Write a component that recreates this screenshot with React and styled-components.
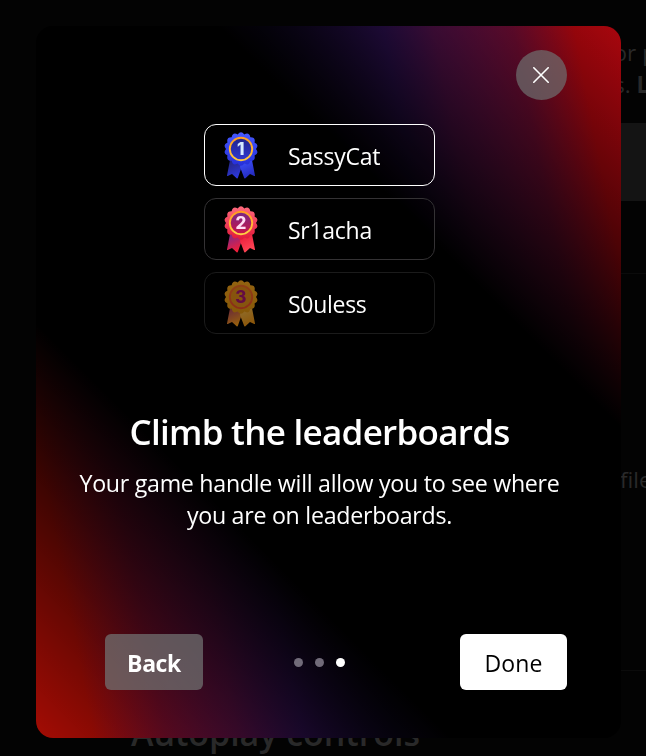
import React from "react";
import styled, { createGlobalStyle } from "styled-components";

const GlobalStyle = createGlobalStyle`
  * { box-sizing: border-box; }
  html, body { margin: 0; height: 100%; overflow: hidden; background: #030303; }
  body { font-family: "Open Sans", "Noto Sans", sans-serif; color: #fff; }
  button { font: inherit; border: 0; padding: 0; cursor: pointer; }
`;

const Page = styled.div`
  width: 646px;
  height: 756px;
  padding-left: 60px;
  overflow: hidden;
  color: #292929;
  background: #030303;
  display: flex;
  flex-direction: column;

  > * { flex: none; }
`;

const Intro = styled.p`
  margin: 0;
  height: 123px;
  padding: 37px 0 0 546px;
  font-size: 22.5px;
  line-height: 32px;
  white-space: nowrap;
`;

const IntroLine = styled.span`
  display: block;
  padding-left: ${(p) => p.$indent || 0}px;
`;

const Panel = styled.div`
  height: 78px;
  background: #141414;
`;

const Section = styled.section`
  height: ${(p) => p.$height}px;
  padding: ${(p) => p.$padding};
  border-bottom: 1px solid #0b0b0b;
  font-size: 22.5px;
  line-height: 32px;
`;

const SectionHeading = styled.h2`
  margin: 0;
  padding: 38px 0 0 71px;
  font-size: 34px;
  line-height: 48px;
  font-weight: 600;
  letter-spacing: -0.05px;
  white-space: nowrap;
`;

const Overlay = styled.div`
  position: fixed;
  inset: 0;
  padding: 26px 25px 18px 36px;
`;

const Dialog = styled.div`
  width: 585px;
  height: 712px;
  padding: 24px 54px 48px 36px;
  border-radius: 17px;
  overflow: hidden;
  display: flex;
  flex-direction: column;
  background:
    linear-gradient(45deg, transparent 0%, #000 32%, #000 69%, transparent 100%),
    linear-gradient(
      79deg,
      rgb(164, 12, 4) 0%,
      rgb(164, 12, 4) 8%,
      rgb(125, 13, 44) 18%,
      rgb(107, 18, 80) 28%,
      rgb(70, 22, 120) 37%,
      rgb(36, 16, 90) 50%,
      rgb(70, 24, 128) 67%,
      rgb(107, 21, 95) 74%,
      rgb(122, 13, 55) 85%,
      rgb(170, 6, 13) 93.5%,
      rgb(168, 6, 14) 100%
    );
`;

const CloseButton = styled.button`
  align-self: flex-end;
  flex: none;
  width: 51px;
  height: 50px;
  border-radius: 50%;
  display: grid;
  place-items: center;
  background: rgba(110, 110, 110, 0.72);

  svg { margin-right: 1px; }
`;

const Leaderboard = styled.ol`
  list-style: none;
  margin: 24px 0 0;
  padding: 0;
  align-self: center;
  display: flex;
  flex-direction: column;
  gap: 12px;
`;

const Player = styled.li`
  width: 231px;
  height: 62px;
  border: 1px solid ${(p) => p.$border};
  border-radius: 12px;
  background: rgba(0, 0, 0, 0.15);
  display: flex;
  align-items: center;
  gap: 30px;
  padding: 1px 0 0 19px;
`;

const MedalIcon = styled.svg`
  flex: none;
  opacity: ${(p) => p.$opacity};
`;

const Handle = styled.span`
  font-size: 23px;
  line-height: 32px;
  font-weight: 460;
  letter-spacing: -0.28px;
`;

const Title = styled.h1`
  margin: 74px 0 0;
  font-size: 35px;
  line-height: 48px;
  font-weight: 640;
  text-align: center;
  white-space: nowrap;
  letter-spacing: -0.72px;
`;

const Description = styled.p`
  margin: 11px 0 0;
  font-size: 23.2px;
  line-height: 32px;
  font-weight: 460;
  text-align: center;
  white-space: nowrap;
  letter-spacing: -0.27px;
`;

const Footer = styled.div`
  margin: auto 0 0 33px;
  display: grid;
  grid-template-columns: 98px 1fr 107px;
  align-items: center;
`;

const FooterButton = styled.button`
  && {
    height: 56px;
    border-radius: 6px;
    padding-top: 2px;
    font-size: 23px;
    letter-spacing: ${(p) => (p.$primary ? "0.1px" : "-0.4px")};
    font-weight: ${(p) => (p.$primary ? 480 : 660)};
    color: ${(p) => (p.$primary ? "#000" : "#fff")};
    background: ${(p) => (p.$primary ? "#fff" : "rgba(112, 112, 112, 0.75)")};
  }
`;

const Dots = styled.div`
  display: flex;
  justify-content: center;
  gap: 12px;
  padding-right: 24px;
`;

const Dot = styled.span`
  width: 9px;
  height: 9px;
  border-radius: 50%;
  background: ${(p) => (p.$active ? "#fff" : "#716b79")};
`;

const rosette = (() => {
  const bumps = 14;
  const cx = 17;
  const cy = 17;
  const point = (r, a) =>
    `${(cx + r * Math.sin(a)).toFixed(2)} ${(cy - r * Math.cos(a)).toFixed(2)}`;
  const step = (Math.PI * 2) / bumps;
  let d = `M${point(15, -step / 2)}`;
  for (let i = 0; i < bumps; i++) {
    d += `Q${point(19, i * step)} ${point(15, (i + 0.5) * step)}`;
  }
  return d + "Z";
})();

const medals = {
  1: {
    badge: ["#4659ff", "#252fd9"], ring: ["#ff9f22", "#ffc83d"], face: ["#20248e", "#3038cf"],
    left: ["#252474", "#2c37db"], right: ["#3e54ff", "#252bc0"], digit: "#d5eaff", opacity: 1,
  },
  2: {
    badge: ["#ff6a7d", "#e01838"], ring: ["#ff9b20", "#ffd044"], face: ["#762887", "#cb1246"],
    left: ["#722b91", "#f11e3b"], right: ["#e51939", "#ff4555"], digit: "#ffdcf4", opacity: 1,
  },
  3: {
    badge: ["#f6a51c", "#df920e"], ring: ["#ef6b24", "#e84c28"], face: ["#e18b16", "#df8e19"],
    left: ["#a83e65", "#f99d18"], right: ["#efb84d", "#e99112"], digit: "#a51470", opacity: 0.6,
  },
};

function Gradient({ id, stops, slanted }) {
  return (
    <linearGradient id={id} x1="0" y1="0" x2={slanted ? "0.4" : "0"} y2="1">
      <stop stopColor={stops[0]} />
      <stop offset="1" stopColor={stops[1]} />
    </linearGradient>
  );
}

function Medal({ rank }) {
  const m = medals[rank];
  const fill = (name) => `url(#${name}${rank})`;
  return (
    <MedalIcon width="34" height="47" viewBox="0 0 34 47" $opacity={m.opacity}>
      <defs>
        <Gradient id={`badge${rank}`} stops={m.badge} />
        <Gradient id={`ring${rank}`} stops={m.ring} />
        <Gradient id={`face${rank}`} stops={m.face} />
        <Gradient id={`left${rank}`} stops={m.left} slanted />
        <Gradient id={`right${rank}`} stops={m.right} slanted />
      </defs>
      <path d="M6 28L3 43.4Q2.9 44.3 3.8 43.9L8 42L12.6 46.2Q13.5 47 13.9 45.8L18.4 33L18 30Z" fill={fill("left")} />
      <path d="M28 28L31 43.4Q31.1 44.3 30.2 43.9L26 42L21.4 46.2Q20.5 47 20.1 45.8L16 35L17 30Z" fill={fill("right")} />
      <path d={rosette} fill={fill("badge")} />
      <circle cx="17" cy="17" r="11.2" fill={fill("face")} stroke={fill("ring")} strokeWidth="1.9" />
      <text x="16.8" y="23" textAnchor="middle" fontFamily="Inter, sans-serif" fontSize="17" fontWeight="800" fill={m.digit}>
        {rank}
      </text>
    </MedalIcon>
  );
}

const players = [
  { rank: 1, handle: "SassyCat", border: "#fff" },
  { rank: 2, handle: "Sr1acha", border: "#343234" },
  { rank: 3, handle: "S0uless", border: "#1b1b1b" },
];

export default function App() {
  return (
    <>
      <GlobalStyle />
      <Page>
        <Intro>
          <IntroLine>for p</IntroLine>
          <IntroLine $indent={8}>s. <b>L</b></IntroLine>
        </Intro>
        <Panel />
        <Section $height={73} $padding="0" />
        <Section $height={397} $padding="190px 0 0 560px">file</Section>
        <SectionHeading>Autoplay controls</SectionHeading>
      </Page>
      <Overlay>
        <Dialog role="dialog" aria-labelledby="dialog-title">
          <CloseButton aria-label="Close">
            <svg width="16" height="16" viewBox="0 0 16 16" stroke="#fff" strokeWidth="1.6" strokeLinecap="round">
              <path d="M0.8 0.8L15.2 15.2M15.2 0.8L0.8 15.2" />
            </svg>
          </CloseButton>
          <Leaderboard>
            {players.map((p) => (
              <Player key={p.rank} $border={p.border}>
                <Medal rank={p.rank} />
                <Handle>{p.handle}</Handle>
              </Player>
            ))}
          </Leaderboard>
          <Title id="dialog-title">Climb the leaderboards</Title>
          <Description>
            Your game handle will allow you to see where
            <br />
            you are on leaderboards.
          </Description>
          <Footer>
            <FooterButton>Back</FooterButton>
            <Dots>
              <Dot />
              <Dot />
              <Dot $active />
            </Dots>
            <FooterButton $primary>Done</FooterButton>
          </Footer>
        </Dialog>
      </Overlay>
    </>
  );
}
